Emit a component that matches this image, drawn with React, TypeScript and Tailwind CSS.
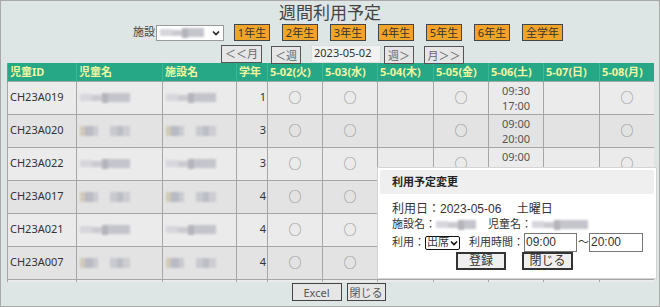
import React from "react";

type Row = { id: string; grade: number; split: boolean; sat: [string, string] };

const rows: Row[] = [
  { id: "CH23A019", grade: 1, split: false, sat: ["09:30", "17:00"] },
  { id: "CH23A020", grade: 3, split: true, sat: ["09:00", "20:00"] },
  { id: "CH23A022", grade: 3, split: false, sat: ["09:00", "20:00"] },
  { id: "CH23A017", grade: 4, split: true, sat: ["09:00", "17:00"] },
  { id: "CH23A021", grade: 4, split: false, sat: ["09:00", "17:00"] },
  { id: "CH23A007", grade: 4, split: true, sat: ["09:00", "17:00"] },
  { id: "CH23A010", grade: 5, split: false, sat: ["09:00", "17:00"] },
];

const days = ["5-02(火)", "5-03(水)", "5-04(木)", "5-05(金)", "5-06(土)", "5-07(日)", "5-08(月)"];
const grades = ["1年生", "2年生", "3年生", "4年生", "5年生", "6年生", "全学年"];

const Blur = ({ split, w = "w-[50px]" }: { split: boolean; w?: string }) =>
  split ? (
    <div className="flex items-center gap-[12px] blur-[1.2px]">
      <div className="flex h-[10px] w-[18px]">
        <div className="h-full w-[5px] bg-[#d2cab8]" />
        <div className="h-full w-[8px] bg-[#b8bac4]" />
        <div className="h-full w-[5px] bg-[#cacad0]" />
      </div>
      <div className="flex h-[10px] w-[20px]">
        <div className="h-full w-[7px] bg-[#c8cad0]" />
        <div className="h-full w-[6px] bg-[#bcbec6]" />
        <div className="h-full w-[7px] bg-[#cdcdd2]" />
      </div>
    </div>
  ) : (
    <div className={`flex h-[11px] ${w} items-center blur-[1.2px]`}>
      <div className="h-[7px] w-[12px] bg-[#d6d6dc]" />
      <div className="h-[6px] w-[10px] bg-[#cacad0]" />
      <div className="h-[10px] w-[6px] bg-[#b4b4bc]" />
      <div className="h-[9px] flex-1 bg-[#c4c4cc]" />
    </div>
  );

const GrayBtn = ({ children, w }: { children: React.ReactNode; w: string }) => (
  <button className={`h-[18px] ${w} border border-[#555] bg-[#e6e6e6] text-[11px] leading-none text-[#666]`}>
    {children}
  </button>
);

export default function App() {
  return (
    <div
      className="relative h-[307px] w-[660px] overflow-hidden border border-[#a9a9a9] bg-[#dde5e5] text-[#333]"
      style={{ fontFamily: '"Noto Sans", "Noto Sans CJK JP", sans-serif' }}
    >
      <div className="h-[22px] pt-[1px] text-center text-[17px] leading-[20px] text-[#444]" style={{ fontFamily: '"Noto Sans CJK JP", sans-serif' }}>
        週間利用予定
      </div>

      <div className="flex h-[19px] items-center pl-[132px]">
        <span className="text-[11px] text-[#444]">施設</span>
        <div className="ml-[1px] flex h-[16px] w-[68px] items-center justify-between border border-[#999] bg-white px-[3px]">
          <Blur split={false} w="w-[44px]" />
          <svg width="8" height="6" viewBox="0 0 8 6">
            <path d="M1 1.5 L4 4.5 L7 1.5" stroke="#222" strokeWidth="1.6" fill="none" />
          </svg>
        </div>
        <div className="ml-[10px] flex gap-[12px]">
          {grades.map((g) => (
            <button
              key={g}
              className={`h-[17px] ${g === "全学年" ? "w-[41px]" : "w-[36px]"} border border-[#444] bg-[#f2a428] text-[11px] leading-none text-[#333]`}
            >
              {g}
            </button>
          ))}
        </div>
      </div>

      <div className="mt-[2px] flex h-[19px] items-center pl-[220px]">
        <GrayBtn w="w-[41px]">＜＜月</GrayBtn>
        <div className="ml-[9px]">
          <GrayBtn w="w-[30px]">＜週</GrayBtn>
        </div>
        <div className="ml-[10px] flex h-[18px] w-[70px] items-center border border-[#ddd] bg-[#f2f2f2] pl-[2px] text-[11px] text-[#333]">
          2023-05-02
        </div>
        <div className="ml-[3px]">
          <GrayBtn w="w-[30px]">週＞</GrayBtn>
        </div>
        <div className="ml-[10px]">
          <GrayBtn w="w-[40px]">月＞＞</GrayBtn>
        </div>
      </div>

      <div className="ml-[6px] h-[219px] w-[647px] overflow-hidden">
        <table className="w-[647px] table-fixed border-collapse text-[11px]">
          <colgroup>
            <col className="w-[69px]" />
            <col className="w-[86px]" />
            <col className="w-[74px]" />
            <col className="w-[31px]" />
            <col className="w-[55px]" />
            <col className="w-[55px]" />
            <col className="w-[56px]" />
            <col className="w-[55px]" />
            <col className="w-[55px]" />
            <col className="w-[56px]" />
            <col className="w-[55px]" />
          </colgroup>
          <thead>
            <tr className="h-[18px] bg-[#26a786] text-left text-[#eef6a0]">
              {["児童ID", "児童名", "施設名", "学年", ...days].map((h) => (
                <th key={h} className="border-x border-[#3ab898] px-[2px] py-0 leading-[17px] font-bold">
                  {h}
                </th>
              ))}
            </tr>
          </thead>
          <tbody>
            {rows.map((r, i) => (
              <tr key={r.id} className={`h-[33px] ${i % 2 === 0 ? "bg-[#ebebeb]" : "bg-[#e3e3e3]"}`}>
                <td className="border border-[#a6a6a6] px-[2px] py-0">{r.id}</td>
                <td className="border border-[#a6a6a6] px-[3px] py-0">
                  <Blur split={r.split} />
                </td>
                <td className="border border-[#a6a6a6] px-[3px] py-0">
                  <Blur split={r.split} />
                </td>
                <td className="border border-[#a6a6a6] px-[1px] py-0 text-right">{r.grade}</td>
                {days.map((d, j) => (
                  <td key={d} className="border border-[#a6a6a6] py-0 text-center text-[#888]">
                    {j === 4 ? (
                      <div className="text-[11px] leading-[15px] text-[#555]">
                        <div>{r.sat[0]}</div>
                        <div>{r.sat[1]}</div>
                      </div>
                    ) : j === 2 || j === 5 ? null : (
                      <span className="text-[13px]">○</span>
                    )}
                  </td>
                ))}
              </tr>
            ))}
          </tbody>
        </table>
      </div>

      <div className="mt-[1px] flex justify-center gap-[5px] pl-[17px]">
        <button className="h-[18px] w-[50px] border border-[#444] bg-[#e6e6e6] text-[11px] leading-none text-[#555]">
          Excel
        </button>
        <button className="h-[18px] w-[39px] border border-[#444] bg-[#e6e6e6] text-[11px] leading-none text-[#555]">
          閉じる
        </button>
      </div>

      <div
        className="absolute left-[376px] top-[166px] h-[112px] w-[280px] whitespace-nowrap border border-[#d4d4d4] bg-white p-[2px] text-[11px] text-[#333]"
        style={{ fontFamily: '"Liberation Sans", "Noto Sans CJK JP", sans-serif' }}
      >
        <div className="flex h-[24px] items-center rounded-[2px] bg-[#efefef] pl-[12px] font-bold text-[#222]">
          利用予定変更
        </div>
        <div className="pl-[12px] pt-[8px] leading-[15px]">
          <div className="text-[12px]">利用日：2023-05-06　 土曜日</div>
          <div className="flex items-center">
            <span>施設名：</span>
            <Blur split={false} w="w-[40px]" />
            <span className="ml-[12px]">児童名：</span>
            <Blur split={false} w="w-[56px]" />
          </div>
          <div className="mt-[1px] flex items-center">
            <span>利用：</span>
            <div className="flex h-[14px] items-center gap-[1px] rounded-[2px] border border-[#111] px-[1px] leading-none">
              出席
              <svg width="8" height="6" viewBox="0 0 8 6">
                <path d="M1 1.5 L4 4.5 L7 1.5" stroke="#111" strokeWidth="1.6" fill="none" />
              </svg>
            </div>
            <span className="ml-[9px]">利用時間：</span>
            <div className="flex h-[19px] w-[53px] items-center border border-[#777] pl-[1px] text-[12px]">09:00</div>
            <span className="ml-[1px]">～</span>
            <div className="flex h-[19px] w-[54px] items-center border border-[#777] pl-[1px] text-[12px]">20:00</div>
          </div>
          <div className="flex gap-[16px] pl-[64px]">
            <button className="h-[18px] w-[50px] border-2 border-[#333] bg-[#efefef] text-[12px] leading-none">登録</button>
            <button className="h-[18px] w-[51px] border-2 border-[#333] bg-[#efefef] text-[12px] leading-none">閉じる</button>
          </div>
        </div>
      </div>
    </div>
  );
}
